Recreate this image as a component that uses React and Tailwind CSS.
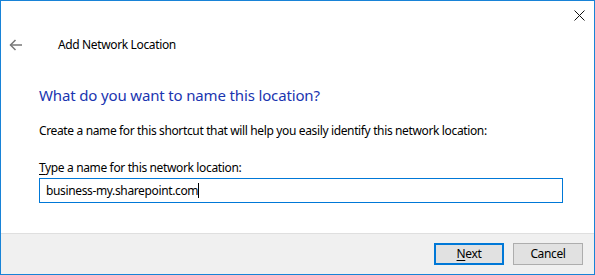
import React from 'react';

const font = { fontFamily: '"Noto Sans", "Open Sans", sans-serif' };

const BackArrow = () => (
  <svg width="14" height="12" viewBox="0 0 14 12" fill="none" stroke="#777" strokeWidth="1.5">
    <path d="M13 6H1.5" />
    <path d="M6.5 1L1.5 6l5 5" />
  </svg>
);

const CloseIcon = () => (
  <svg width="11" height="11" viewBox="0 0 11 11" fill="none" stroke="#111" strokeWidth="1">
    <path d="M0.5 0.5l10 10M10.5 0.5l-10 10" />
  </svg>
);

const App = () => {
  return (
    <div
      className="w-[595px] h-[275px] bg-white border border-[#1883d7] flex flex-col text-[12px] tracking-[-0.36px] text-black"
      style={font}
    >
      {/* title bar */}
      <div className="h-[29px] flex justify-end">
        <div className="w-[30px] h-[29px] flex items-center justify-center">
          <CloseIcon />
        </div>
      </div>

      {/* header */}
      <div className="h-[30px] flex items-center pl-[8px]">
        <BackArrow />
        <span className="ml-[35px] leading-[16px]">Add Network Location</span>
      </div>

      {/* content */}
      <div className="pl-[38px] pr-[31px] flex flex-col">
        <h1 className="mt-[24px] text-[15px] leading-[22px] tracking-[-0.15px] text-[#1a35b0] font-normal">
          What do you want to name this location?
        </h1>
        <p className="mt-[17px] leading-[16px]">
          Create a name for this shortcut that will help you easily identify this network location:
        </p>
        <label className="mt-[21px] leading-[16px]">
          <span className="underline underline-offset-2">T</span>ype a name for this network location:
        </label>
        <div className="mt-[2px] h-[25px] border border-[#0078d7] flex items-center px-[6px]">
          <span className="leading-[16px]">business-my.sharepoint.com</span>
          <span className="w-px h-[15px] bg-black" />
        </div>
      </div>

      <div className="flex-1" />

      {/* footer */}
      <div className="h-[41px] bg-[#f0f0f0] border-t border-[#dfdfdf] flex justify-end items-start pt-[9px] pr-[11px] gap-[9px]">
        <button className="w-[70px] h-[22px] bg-[#e1e1e1] border-2 border-[#0078d7] leading-[16px]">
          <span className="underline underline-offset-2">N</span>ext
        </button>
        <button className="w-[70px] h-[22px] bg-[#e1e1e1] border border-[#adadad] leading-[16px]">
          Cancel
        </button>
      </div>
    </div>
  );
};

export default App;
